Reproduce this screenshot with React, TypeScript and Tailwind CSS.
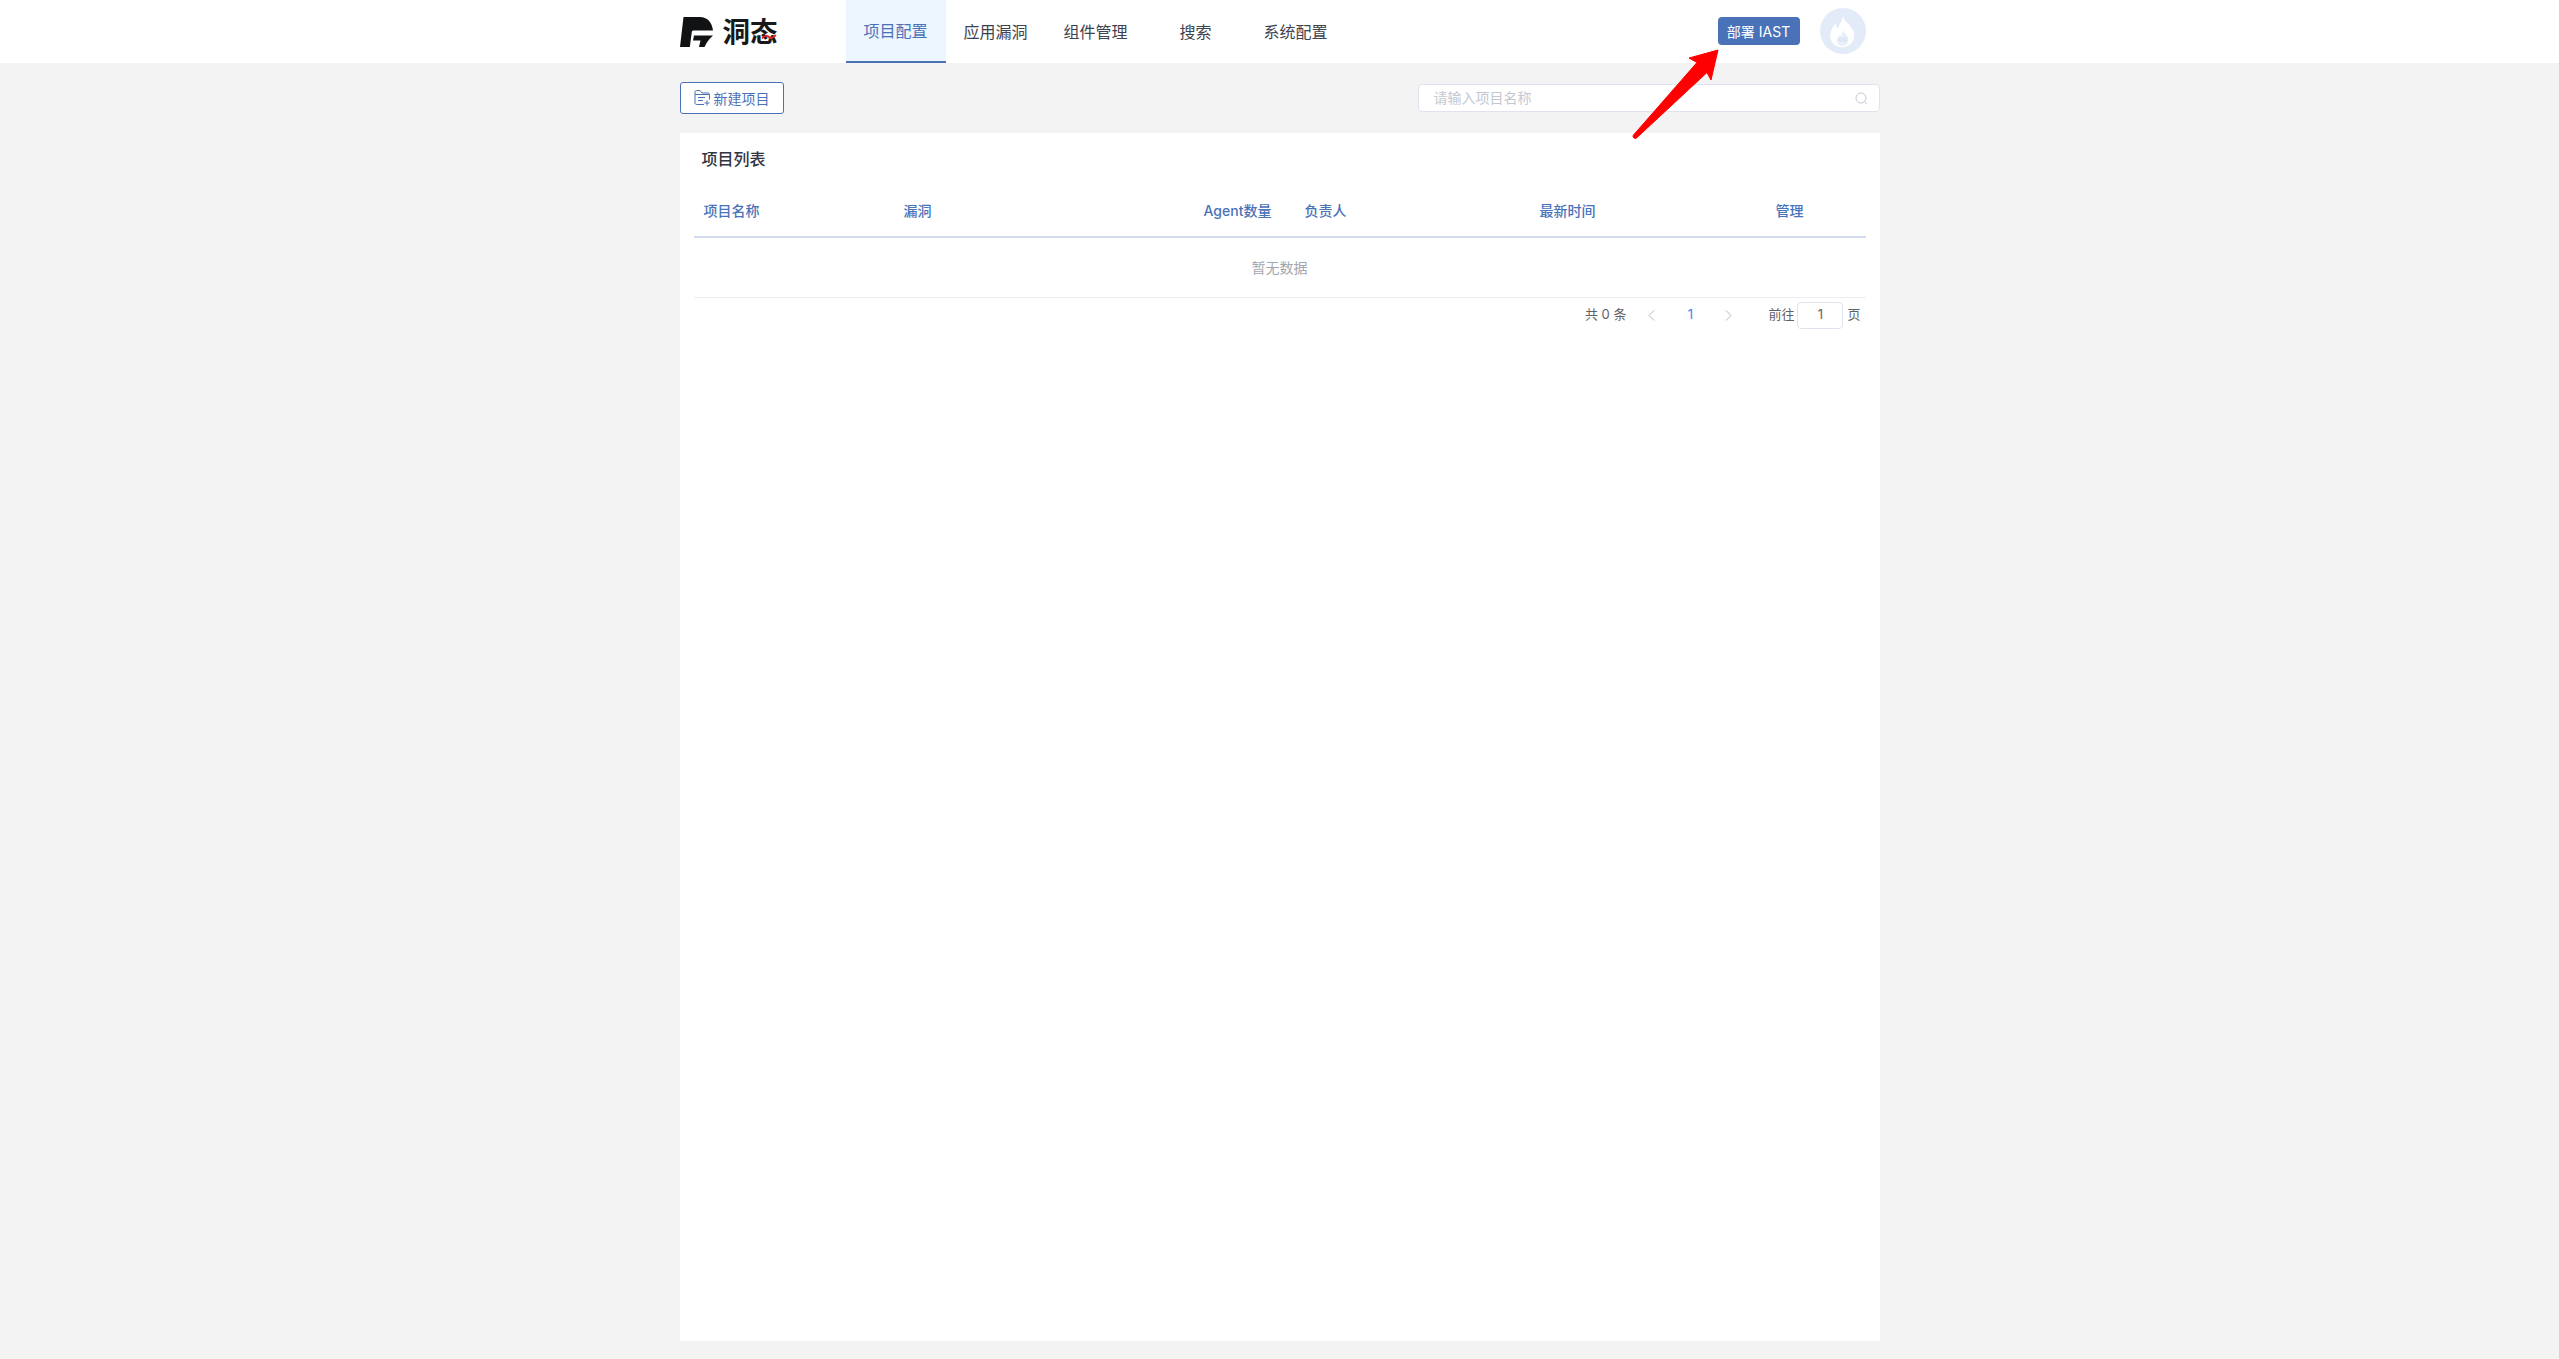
import React from "react";

const nav = ["项目配置", "应用漏洞", "组件管理", "搜索", "系统配置"];
const cols = [
  { label: "项目名称", w: "w-[200px]" },
  { label: "漏洞", w: "w-[300px]" },
  { label: "Agent数量", w: "w-[101px]" },
  { label: "负责人", w: "w-[235px]" },
  { label: "最新时间", w: "w-[236px]" },
  { label: "管理", w: "w-[100px]" },
];

function LogoMark() {
  return (
    <svg width="33" height="30" viewBox="0 0 33 30" className="shrink-0">
      <path d="M3.500 0H20C27 0 32 5 33 13.500H14C12.500 13.500 12 14 11.800 15L9.800 30H0Z" fill="#111214" />
      <path d="M14 18.500H33L31.500 20C29 22 27 25 24.500 30H19L20.500 23.500H13Z" fill="#111214" />
    </svg>
  );
}

function Logo() {
  return (
    <div className="flex items-center w-[98px] h-[30px] gap-[10px] shrink-0">
      <LogoMark />
      <div className="relative h-[30px] w-[55px]">
        <span className="block text-[27.5px] leading-[30px] font-bold text-[#17181a] whitespace-nowrap">洞态</span>
        <svg width="16" height="6" viewBox="0 0 16 6" className="absolute left-[38px] top-[17px]">
          <path d="M1 4.500C4 1 6 1 8 3S12 4 15 1.200" fill="none" stroke="#e02020" strokeWidth="1.800" />
        </svg>
      </div>
    </div>
  );
}

function FolderPlus() {
  return (
    <svg width="17" height="16" viewBox="0 0 17 16" fill="none" stroke="#4a72b8" strokeWidth="1" className="shrink-0">
      <path d="M10 14.500H2.500C1.700 14.500 1 13.800 1 13V2C1 1.200 1.700 .5 2.500 .5H6L8 3H14C15 3 15.500 3.700 15.500 4.500V9.500" />
      <path d="M1 4.500H15.500" />
      <path d="M4 7.500H11M4 10.500H9M13 10.500V15.500M10.500 13H15.500" />
    </svg>
  );
}

function Flame() {
  return (
    <svg width="25" height="33" viewBox="0 0 26 33">
      <path d="M13.500 0C15 6 21 9 24 15C27 22 24 32 13 33C3 33 -2 24 1 16C2.500 12 4 11 5.500 8C6.500 10 7 12 8 13C10 9 13 5 13.500 0Z" fill="#ffffff" />
      <path d="M13.500 15C14.500 18 18.500 20 19 24.500C19.500 28 17 31.500 13 31.500C9 31.500 6.500 28 7.200 24.500C7.700 22.500 9 21.500 9.700 20C10.200 20.800 10.500 21.300 11 21.700C12 19.500 13.200 17.500 13.500 15Z" fill="#eaf0f9" />
      <circle cx="11" cy="25" r="1.800" fill="none" stroke="#cfdcee" />
      <circle cx="15.500" cy="25" r="1.800" fill="none" stroke="#cfdcee" />
    </svg>
  );
}

function Arrow() {
  return (
    <svg width="92" height="94" viewBox="0 0 92 94" className="absolute left-[1630px] top-[47px] pointer-events-none">
      <path
        d="M88 3L59 11L67 15.500L3.500 88C2 90 4.500 92.500 6.500 91L77 25.500L81 33Z"
        fill="#fe0000"
        stroke="#fe0000"
        strokeWidth="1"
        strokeLinejoin="round"
      />
    </svg>
  );
}

export default function App() {
  return (
    <div
      className="relative min-h-screen flex flex-col bg-[#f3f3f3] text-[14px]"
      style={{ fontFamily: 'Inter, "Noto Sans CJK SC", sans-serif' }}
    >
      <header className="h-[63px] bg-white shrink-0">
        <div className="w-[1200px] h-full mx-auto flex items-center">
          <Logo />
          <nav className="flex h-full ml-[68px]">
            {nav.map((n, i) => (
              <a
                key={n}
                className={
                  i === 0
                    ? "w-[100px] h-full flex items-center justify-center text-[16px] text-[#4a72b8] bg-[#edf6fe] border-b-2 border-[#4a72b8]"
                    : "w-[100px] h-full flex items-center justify-center text-[16px] text-[#3d4350]"
                }
              >
                {n}
              </a>
            ))}
          </nav>
          <div className="ml-auto flex items-center gap-[20px] pr-[14px] pb-[1px]">
            <button className="w-[82px] h-[28px] rounded-[4px] bg-[#4a72b8] text-white text-[14px] whitespace-nowrap">
              部署 IAST
            </button>
            <div className="w-[46px] h-[46px] rounded-full bg-[#e2ebf7] flex items-center justify-center">
              <Flame />
            </div>
          </div>
        </div>
      </header>

      <main className="w-[1200px] mx-auto flex-1 flex flex-col pb-[18px]">
        <div className="flex items-center justify-between h-[70px]">
          <button className="w-[104px] h-[32px] flex items-center justify-center gap-[3px] border border-[#4a72b8] rounded-[3px] bg-white text-[#4a72b8] text-[14px]">
            <FolderPlus />
            <span className="whitespace-nowrap">新建项目</span>
          </button>
          <div className="w-[462px] h-[28px] flex items-center justify-between border border-[#dfe3ed] rounded-[4px] bg-white pl-[15px] pr-[11px]">
            <span className="text-[#c3c8d0] text-[14px] leading-[20px] pb-[1px]">请输入项目名称</span>
            <svg width="13" height="13" viewBox="0 0 13 13" fill="none" stroke="#c3c8d0" strokeWidth="1">
              <circle cx="6" cy="6" r="5" />
              <path d="M9.700 9.700L12 12" />
            </svg>
          </div>
        </div>

        <section className="flex-1 bg-white px-[14px]">
          <h2 className="h-[52px] pt-[14px] pl-[8px] text-[16px] leading-[24px] font-medium text-[#2f3542]">项目列表</h2>
          <div className="flex h-[53px] items-center border-b-2 border-[#d3dcec] text-[#4a72b8] font-medium">
            {cols.map((c) => (
              <div key={c.label} className={`${c.w} pl-[10px] whitespace-nowrap`}>
                {c.label}
              </div>
            ))}
          </div>
          <div className="h-[60px] flex items-center justify-center border-b border-[#ebedf3] text-[#a3a6ad]">暂无数据</div>
          <div className="flex items-center justify-end h-[34px] pr-[5px] text-[13px] text-[#606266]">
            <span className="whitespace-nowrap">共 0 条</span>
            <svg width="7" height="11" viewBox="0 0 7 11" fill="none" stroke="#b4b7bd" className="ml-[22px]">
              <path d="M6 .5L1 5.500L6 10.500" />
            </svg>
            <span className="ml-[30px] w-[10px] text-[#3b82f6] text-center">1</span>
            <svg width="7" height="11" viewBox="0 0 7 11" fill="none" stroke="#b4b7bd" className="ml-[30px]">
              <path d="M1 .5L6 5.500L1 10.500" />
            </svg>
            <span className="ml-[36px] whitespace-nowrap">前往</span>
            <span className="ml-[3px] w-[46px] h-[27px] flex items-center justify-center border border-[#dfe3ed] rounded-[4px]">1</span>
            <span className="ml-[4px]">页</span>
          </div>
        </section>
      </main>
      <Arrow />
    </div>
  );
}
